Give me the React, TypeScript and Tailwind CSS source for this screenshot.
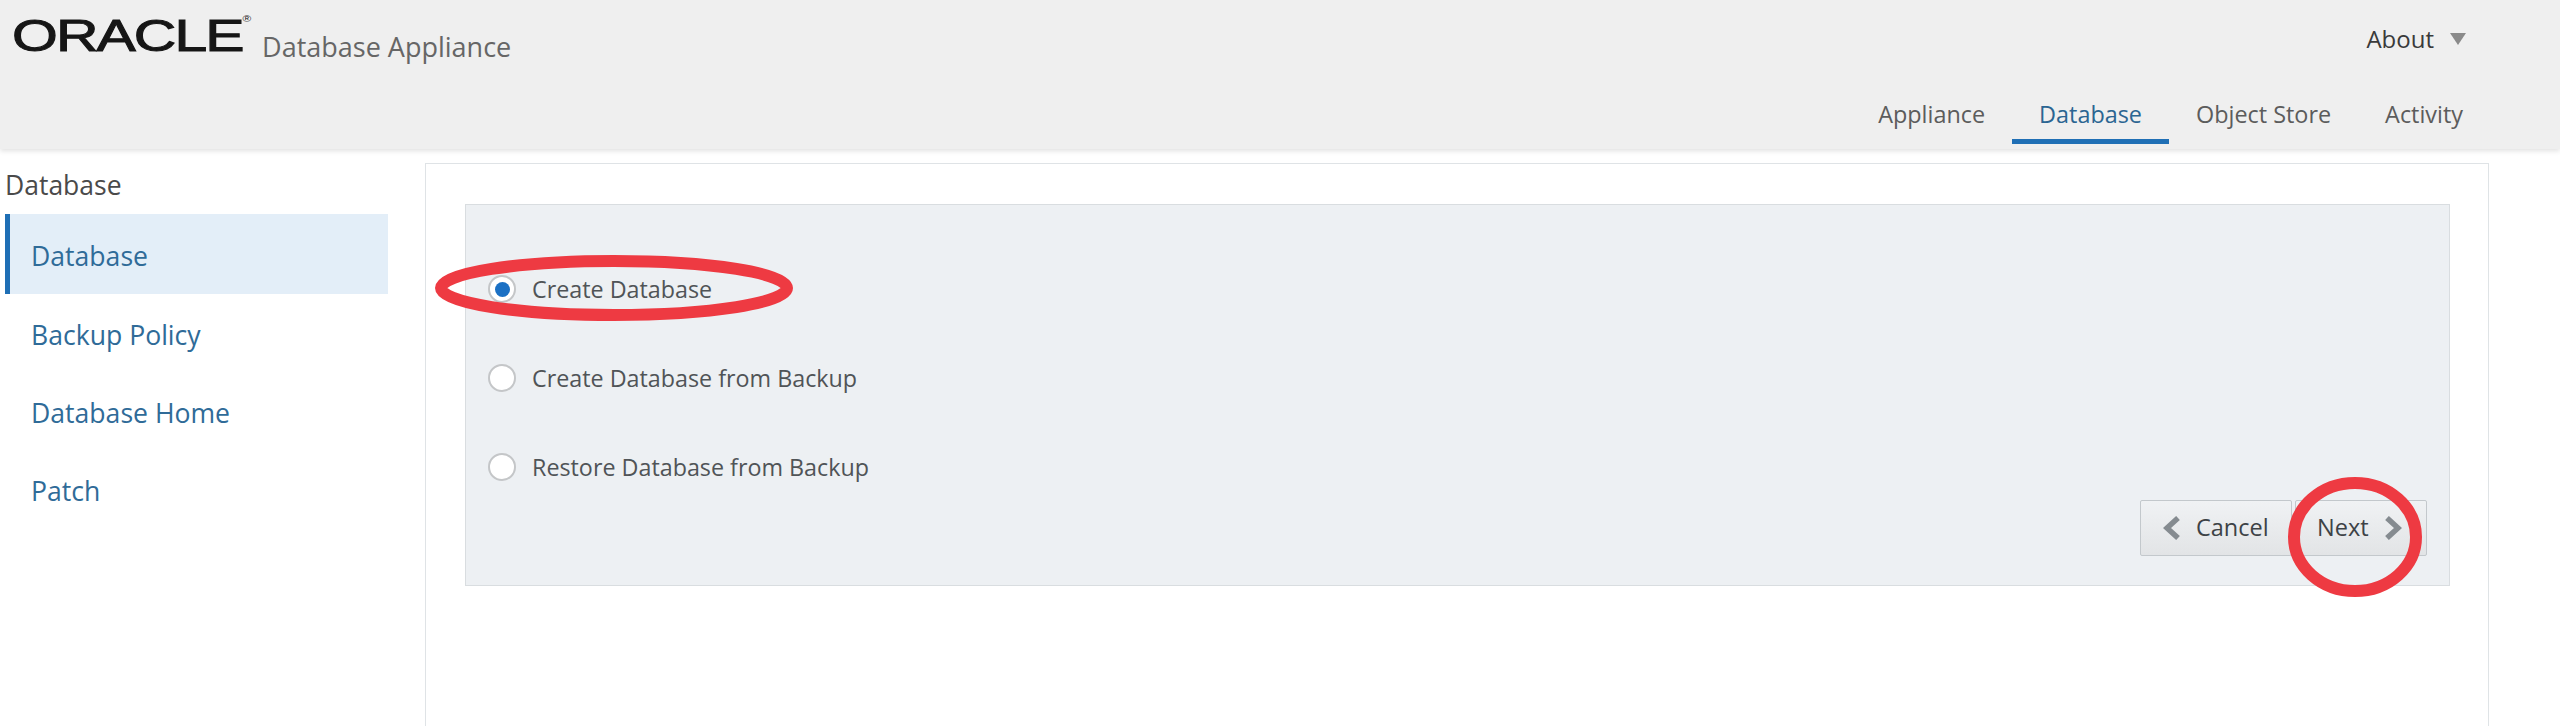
import React from "react";

const sans = "font-['Open_Sans',sans-serif]";

function Tab({ label, active = false }: { label: string; active?: boolean }) {
  return (
    <div
      className={`flex h-[46px] items-start justify-center border-b-[5px] px-[27px] text-[23.4px] leading-[32px] ${
        active ? "border-[#1f6fb5] text-[#2b6592]" : "border-transparent text-[#5c5c5c]"
      }`}
    >
      {label}
    </div>
  );
}

function SideItem({ label, active = false }: { label: string; active?: boolean }) {
  return (
    <div
      className={`flex h-[78px] items-center border-l-[5px] pl-[21px] pt-[5px] text-[26.6px] text-[#2f6b98] ${
        active ? "h-[80px] border-[#1f6fb5] bg-[#e3eef8]" : "border-transparent"
      }`}
    >
      {label}
    </div>
  );
}

function Radio({ label, checked = false }: { label: string; checked?: boolean }) {
  return (
    <div className="flex h-[30px] items-center gap-[16px] text-[23.3px] text-[#505457]">
      <span className="flex h-[28px] w-[28px] items-center justify-center rounded-full border-2 border-[#c4c6c8] bg-white">
        {checked && <span className="h-[15px] w-[15px] rounded-full bg-[#1b70c4]" />}
      </span>
      {label}
    </div>
  );
}

function Chevron({ dir }: { dir: "left" | "right" }) {
  return (
    <svg width="18" height="24" viewBox="0 0 18 24" fill="none">
      <path
        d={dir === "left" ? "M15 2 L4 12 L15 22" : "M3 2 L14 12 L3 22"}
        stroke="#858b90"
        strokeWidth="5.5"
      />
    </svg>
  );
}

export default function App() {
  return (
    <div className={`relative h-[726px] w-[2560px] overflow-hidden bg-white ${sans}`}>
      {/* Header */}
      <header className="flex h-[149px] flex-col bg-[#efefef] shadow-[0_2px_5px_rgba(0,0,0,0.12)]">
        <div className="flex h-[98px] items-start justify-between pl-[12px] pr-[94px]">
          <div className="flex items-start">
            <span className="relative mt-[5px] origin-left scale-x-[1.31] font-['Liberation_Sans',sans-serif] text-[45px] leading-[62px] tracking-[-1.5px] text-[#161616] [-webkit-text-stroke:1px_#161616]">
              ORACLE
              <span className="absolute left-[176px] top-[9px] text-[9px] leading-[10px] tracking-normal [-webkit-text-stroke:0px]">®</span>
            </span>
            <span className="ml-[74px] mt-[29px] text-[27px] leading-[36px] text-[#666666]">Database Appliance</span>
          </div>
          <div className="mt-[22px] flex items-center gap-[16px] text-[24px] leading-[34px] text-[#3a3a3a]">
            About
            <span className="h-0 w-0 border-x-[8px] border-t-[12px] border-x-transparent border-t-[#8a8a8a]" />
          </div>
        </div>
        <nav className="flex justify-end pr-[70px]">
          <Tab label="Appliance" />
          <Tab label="Database" active />
          <Tab label="Object Store" />
          <Tab label="Activity" />
        </nav>
      </header>

      <div className="flex pt-[14px]">
        {/* Sidebar */}
        <aside className="ml-[5px] w-[383px] shrink-0">
          <div className="flex h-[51px] items-center pb-[6px] text-[26.5px] text-[#4a4a4a]">Database</div>
          <SideItem label="Database" active />
          <SideItem label="Backup Policy" />
          <SideItem label="Database Home" />
          <SideItem label="Patch" />
        </aside>

        {/* Main panel */}
        <main className="ml-[37px] h-[600px] w-[2064px] border border-[#dfe3e6] bg-white px-[39px] pt-[40px]">
          <div className="relative h-[382px] w-[1985px] border border-[#d9dde0] bg-[#edf0f3] pl-[22px] pt-[69px]">
            <div className="flex flex-col gap-[59px]">
              <Radio label="Create Database" checked />
              <Radio label="Create Database from Backup" />
              <Radio label="Restore Database from Backup" />
            </div>
            <div className="absolute bottom-[29px] right-[22px] flex gap-[3px] text-[23.5px] text-[#3d4246]">
              <button className="flex h-[56px] w-[152px] items-center gap-[15px] rounded-[2px] border border-[#c3c8cc] bg-gradient-to-b from-[#f0f2f4] to-[#e2e4e6] pl-[22px]">
                <Chevron dir="left" />
                Cancel
              </button>
              <button className="flex h-[56px] w-[132px] items-center gap-[15px] rounded-[2px] border border-[#c3c8cc] bg-gradient-to-b from-[#f0f2f4] to-[#e2e4e6] pl-[21px]">
                Next
                <Chevron dir="right" />
              </button>
            </div>
          </div>
        </main>
      </div>

      {/* Red annotations drawn over the screenshot */}
      <svg className="pointer-events-none absolute inset-0" width="2560" height="726" fill="none">
        <ellipse cx="614" cy="288" rx="173" ry="27" stroke="#ee3a42" strokeWidth="12" />
        <ellipse cx="2355" cy="537" rx="61" ry="54" stroke="#ee3a42" strokeWidth="12" />
      </svg>
    </div>
  );
}
